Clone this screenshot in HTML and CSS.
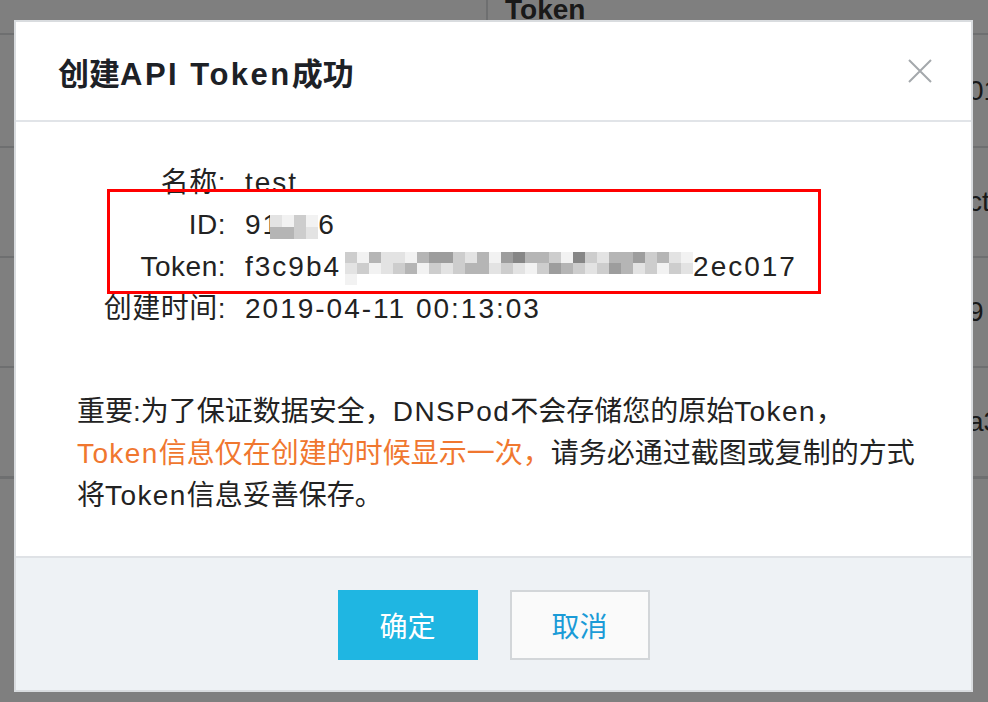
FILE: index.html
```html
<!DOCTYPE html>
<html lang="zh-CN">
<head>
  <meta charset="UTF-8" />
  <title>创建API Token成功</title>
  <link rel="stylesheet" href="styles.css">
</head>
<body>

<div class="bg-table">
  <div class="bg-head">
    <div class="bg-col"></div>
    <div class="bg-th">Token</div>
  </div>
  <div class="bg-row bg-row-first"><span class="bg-cell">01</span></div>
  <div class="bg-row"><span class="bg-cell">ct</span></div>
  <div class="bg-row"><span class="bg-cell">9</span></div>
  <div class="bg-row bg-row-last"><span class="bg-cell">a3</span></div>
</div>

<div class="mask"></div>

<div class="dialog">
  <div class="dialog-hd">
    <h3>创建<span class="en">API Token</span>成功</h3>
    <button class="close" aria-label="关闭">
      <svg width="24" height="24" viewBox="0 0 24 24">
        <path d="M1 1 L23 23 M23 1 L1 23" stroke="#a4a8ac" stroke-width="2" fill="none" />
      </svg>
    </button>
  </div>

  <div class="dialog-bd">
    <div class="info">
      <div class="label">名称:</div>
      <div class="value">test</div>

      <div class="label">ID:</div>
      <div class="value">91<span class="mosaic mosaic-id">
        <i class="m-a"></i><i class="m-w"></i><i class="m-b"></i><i class="m-w"></i>
        <i class="m-c"></i><i class="m-c"></i><i class="m-b"></i><i class="m-a"></i>
      </span>6</div>

      <div class="label">Token:</div>
      <div class="value">f3c9b4<span class="mosaic mosaic-token">
        <i class="m-b"></i><i class="m-w"></i><i class="m-c"></i><i class="m-a"></i><i class="m-a"></i><i class="m-w"></i><i class="m-c"></i><i class="m-d"></i>
        <i class="m-d"></i><i class="m-b"></i><i class="m-a"></i><i class="m-c"></i><i class="m-w"></i><i class="m-d"></i><i class="m-e"></i>
        <i class="m-c"></i><i class="m-c"></i><i class="m-b"></i><i class="m-w"></i><i class="m-e"></i><i class="m-b"></i><i class="m-a"></i>
        <i class="m-c"></i><i class="m-c"></i><i class="m-d"></i><i class="m-b"></i><i class="m-c"></i><i class="m-a"></i><i class="m-w"></i>
        <i class="m-a"></i><i class="m-b"></i><i class="m-w"></i><i class="m-a"></i><i class="m-b"></i><i class="m-c"></i><i class="m-w"></i><i class="m-b"></i>
        <i class="m-a"></i><i class="m-b"></i><i class="m-c"></i><i class="m-c"></i><i class="m-a"></i><i class="m-b"></i><i class="m-a"></i>
        <i class="m-w"></i><i class="m-b"></i><i class="m-d"></i><i class="m-c"></i><i class="m-b"></i><i class="m-a"></i><i class="m-b"></i>
        <i class="m-d"></i><i class="m-c"></i><i class="m-a"></i><i class="m-b"></i><i class="m-w"></i><i class="m-b"></i><i class="m-a"></i><i class="m-w"></i>
      </span>2ec017</div>

      <div class="label">创建时间:</div>
      <div class="value">2019-04-11 00:13:03</div>
    </div>

    <p class="tip">
      重要:为了保证数据安全，<span class="en">DNSPod</span>不会存储您的原始<span class="en">Token</span>，<br>
      <span class="warn"><span class="en">Token</span>信息仅在创建的时候显示一次，</span>请务必通过截图或复制的方式将<span class="en">Token</span>信息妥善保存。
    </p>
  </div>

  <div class="dialog-ft">
    <button class="btn btn-primary">确定</button>
    <button class="btn">取消</button>
  </div>
</div>

<!-- screenshot annotation -->
<div class="mark"></div>

</body>
</html>
```

FILE: styles.css
```css
body {
  margin: 0;
  width: 988px;
  height: 702px;
  overflow: hidden;
  background: #fff;
  font-family: "Liberation Sans", "Noto Sans CJK SC", sans-serif;
  color: #222;
}

/* page behind the dialog */
.bg-table {
  margin-top: -13px;
  color: #333;
  font-size: 28px;
}

.bg-head {
  display: flex;
  height: 46px;
  border-bottom: 2px solid #dcdee1;
}

.bg-col {
  width: 486px;
  border-right: 2px solid #dcdee1;
}

.bg-th {
  padding-left: 17px;
  line-height: 46px;
  font-weight: bold;
}

.bg-row {
  display: flex;
  justify-content: flex-end;
  align-items: center;
  height: 108px;
  border-bottom: 2px solid #dcdee1;
}

.bg-row-first {
  height: 111px;
}

.bg-row-last {
  border-bottom-width: 3px;
}

.bg-cell {
  width: 20px;
  white-space: nowrap;
  overflow: hidden;
}

.mask {
  position: fixed;
  inset: 0;
  background: rgba(0, 0, 0, 0.5);
}

/* dialog */
.dialog {
  position: absolute;
  left: 14px;
  top: 20px;
  width: 959px;
  box-sizing: border-box;
  background: #fff;
  border: 2px solid #d9dcdf;
}

.dialog-hd {
  display: flex;
  align-items: center;
  justify-content: space-between;
  height: 98px;
  padding: 0 39px 0 42px;
  border-bottom: 2px solid #e1e4e8;
}

.dialog-hd h3 {
  margin: 0;
  font-size: 31px;
  font-weight: bold;
  color: #1d2126;
}

.dialog-hd h3 .en {
  letter-spacing: 2.5px;
}

.close {
  display: flex;
  padding: 0;
  border: none;
  background: none;
  cursor: pointer;
}

.dialog-bd {
  padding: 40px 44px 39px 61px;
}

.info {
  display: grid;
  grid-template-columns: 149px 1fr;
  column-gap: 19px;
  font-size: 28px;
  line-height: 42px;
}

.label {
  text-align: right;
  letter-spacing: 0.5px;
}

.value {
  letter-spacing: 2px;
}

.mosaic {
  display: inline-grid;
  grid-auto-rows: 11px;
  vertical-align: middle;
  filter: blur(0.6px);
}

.mosaic i {
  display: block;
}

.mosaic-id {
  grid-template-columns: repeat(4, 12px);
  grid-auto-rows: 12px;
  margin-left: -10px;
}

.mosaic-token {
  grid-template-columns: repeat(29, 12px);
  margin-left: 4px;
}

.m-w { background: #f2f2f2; }
.m-a { background: #e3e3e3; }
.m-b { background: #cdcdcd; }
.m-c { background: #b5b5b5; }
.m-d { background: #9d9d9d; }
.m-e { background: #868686; }

.tip {
  margin: 61px 0 0;
  font-size: 28px;
  line-height: 42px;
}

.tip .en {
  letter-spacing: 1.4px;
}

.warn {
  color: #f0772f;
}

.dialog-ft {
  display: flex;
  justify-content: center;
  gap: 32px;
  padding: 32px 0 30px;
  background: #eef2f5;
  border-top: 2px solid #dfe2e6;
}

.btn {
  width: 140px;
  height: 70px;
  box-sizing: border-box;
  font-family: inherit;
  font-size: 28px;
  color: #1a9bd7;
  background: #fafafa;
  border: 2px solid #d3d6d9;
  cursor: pointer;
}

.btn-primary {
  color: #fff;
  background: #1fb6e2;
  border-color: #1fb6e2;
}

.mark {
  position: absolute;
  left: 107px;
  top: 189px;
  width: 714px;
  height: 105px;
  box-sizing: border-box;
  border: 3px solid #ff0000;
}
```
